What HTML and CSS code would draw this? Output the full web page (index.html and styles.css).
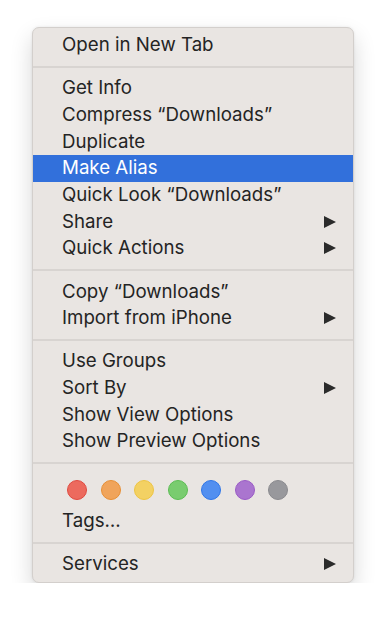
FILE: index.html
```
<!DOCTYPE html>
<html>
<head lang="en">
    <meta charset="UTF-8">
    <title>Context Menu</title>
    <link rel="stylesheet" href="styles.css">
</head>
<body>
<div class="m-menu">
    <ul class="m-menu-list">
        <li>Open in New Tab</li>
        <li class="sep"></li>
        <li>Get Info</li>
        <li>Compress “Downloads”</li>
        <li>Duplicate</li>
        <li class="active">Make Alias</li>
        <li>Quick Look “Downloads”</li>
        <li class="sub">Share</li>
        <li class="sub">Quick Actions</li>
        <li class="sep"></li>
        <li>Copy “Downloads”</li>
        <li class="sub">Import from iPhone</li>
        <li class="sep"></li>
        <li>Use Groups</li>
        <li class="sub">Sort By</li>
        <li>Show View Options</li>
        <li>Show Preview Options</li>
        <li class="sep"></li>
        <li class="tags">
            <span class="dot red"></span>
            <span class="dot orange"></span>
            <span class="dot yellow"></span>
            <span class="dot green"></span>
            <span class="dot blue"></span>
            <span class="dot purple"></span>
            <span class="dot gray"></span>
        </li>
        <li>Tags…</li>
        <li class="sep"></li>
        <li class="sub">Services</li>
    </ul>
</div>
</body>
</html>
```

FILE: styles.css
```
* {
    margin: 0;
    padding: 0;
}
ul {
    list-style: none;
}
body {
    background-color: #fff;
    font-family: Inter, "Liberation Sans", sans-serif;
}
.m-menu {
    width: 320px;
    margin: 27px 0 0 32px;
    padding: 4px 0 4px;
    border: 1px solid #d3cfcc;
    border-radius: 7px;
    background-color: #e9e5e2;
    box-shadow: 0 10px 22px rgba(0, 0, 0, 0.16), 0 0 3px rgba(0, 0, 0, 0.08);
}
.m-menu-list>li {
    position: relative;
    height: 26.7px;
    line-height: 26.7px;
    padding-left: 29px;
    font-size: 18.7px;
    color: #242424;
    white-space: nowrap;
}
.m-menu-list>li.active {
    background-color: #3270db;
    color: #fff;
}
.m-menu-list>li.sep {
    height: 2px;
    margin: 7.25px 0;
    padding: 0;
    background-color: #d8d4d1;
}
.m-menu-list>li.sub::after {
    content: "";
    position: absolute;
    right: 17px;
    top: 7px;
    border-style: solid;
    border-width: 6.5px 0 6.5px 12px;
    border-color: transparent transparent transparent #2b2b2b;
}
.m-menu-list>li.tags {
    display: flex;
    align-items: center;
    gap: 13.5px;
    height: 36px;
    padding-left: 34px;
}
.dot {
    width: 18px;
    height: 18px;
    border-radius: 50%;
    border: 1px solid;
}
.dot.red { background-color: #ec6a5e; border-color: #df4a40; }
.dot.orange { background-color: #f0a45b; border-color: #e88f34; }
.dot.yellow { background-color: #f3d163; border-color: #eec442; }
.dot.green { background-color: #79cc6f; border-color: #5cbd53; }
.dot.blue { background-color: #528ff0; border-color: #2f76e8; }
.dot.purple { background-color: #aa75cf; border-color: #9a5bc6; }
.dot.gray { background-color: #98989c; border-color: #8a8a8e; }
```
